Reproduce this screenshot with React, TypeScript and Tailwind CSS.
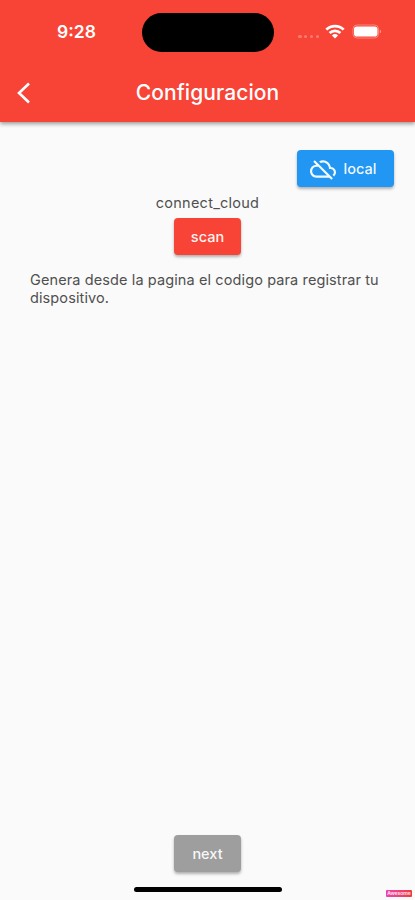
import type { ReactNode } from 'react';
import { MdOutlineCloudOff } from 'react-icons/md';

function StatusBar() {
  return (
    <div className="flex h-[64px] items-center">
      <div className="w-[142px] pl-[57px] text-[17.5px] font-semibold leading-none">
        9:28
      </div>
      <div className="h-[39px] w-[132px] rounded-full bg-black" />
      <div className="flex h-[20px] items-center pl-6">
        <div className="flex gap-[2.4px] pt-[9px]">
          {[0, 1, 2, 3].map((dot) => (
            <span key={dot} className="h-[3.5px] w-[3.5px] rounded-full bg-white/30" />
          ))}
        </div>
        <svg className="relative -top-px ml-[6px] h-[15px] w-[20px]" viewBox="0 0 20 15" aria-hidden="true">
          <g fill="none" stroke="white" strokeWidth="2.7">
            <path d="M1.3 5.6a12.4 12.4 0 0 1 17.4 0" />
            <path d="M4.6 9a7.7 7.7 0 0 1 10.8 0" />
          </g>
          <path d="M10 14.6 6.9 11.4a4.5 4.5 0 0 1 6.2 0Z" fill="white" />
        </svg>
        <svg className="relative -top-px ml-[7px] h-[15px] w-[30px]" viewBox="0 0 30 15" aria-hidden="true">
          <rect x="1" y="1" width="25.5" height="13" rx="4" fill="none" stroke="white" strokeOpacity="0.35" />
          <rect x="2" y="2.5" width="23.5" height="10" rx="2.8" fill="white" />
          <path d="M27.8 5.5v4c1.6-.6 1.6-3.4 0-4Z" fill="white" fillOpacity="0.5" />
        </svg>
      </div>
    </div>
  );
}

function Button({ color, children }: { color: string; children: ReactNode }) {
  return (
    <button
      type="button"
      className={`flex h-[37px] items-center justify-center rounded-[4px] text-[14.5px] font-medium text-white/95 shadow-[0_2px_3px_rgba(0,0,0,0.3)] ${color}`}
    >
      {children}
    </button>
  );
}

export default function App() {
  return (
    <div className="flex h-[900px] w-[415px] flex-col bg-[#fafafa] font-['Inter','Liberation_Sans',sans-serif] text-[#505050]">
      <header className="h-[122px] shrink-0 bg-[#f74436] text-white shadow-[0_2px_4px_rgba(0,0,0,0.38)]">
        <StatusBar />
        <div className="grid h-[57px] grid-cols-[60px_1fr_60px] items-center">
          <button type="button" aria-label="Back" className="pl-[17px]">
            <svg className="h-[22px] w-[14px]" viewBox="0 0 14 22" aria-hidden="true">
              <path d="M12 1.5 2 11l10 9.5" fill="none" stroke="white" strokeWidth="2.6" />
            </svg>
          </button>
          <h1 className="text-center text-[21px] font-medium tracking-[0.1px]">Configuracion</h1>
        </div>
      </header>

      <main className="flex flex-1 flex-col items-center pt-7">
        <div className="mr-[21px] self-end">
          <Button color="w-[97px] bg-[#2196f3] gap-2 pr-[5px]">
            <MdOutlineCloudOff className="h-[26px] w-[26px]" />
            <span>local</span>
          </Button>
        </div>
        <p className="mt-[7px] mb-[6px] text-[14.5px] leading-[18px] tracking-[0.25px]">connect_cloud</p>
        <Button color="w-[67px] bg-[#f74436]">scan</Button>
        <p className="mt-[16px] w-[355px] text-[14.5px] leading-[18px] tracking-[0.11px]">
          Genera desde la pagina el codigo para registrar tu dispositivo.
        </p>
      </main>

      <footer className="relative flex h-[65px] shrink-0 flex-col items-center">
        <Button color="w-[67px] bg-[#9e9e9e]">next</Button>
        <div className="mt-[15px] h-[5px] w-[148px] rounded-full bg-black" />
        <div className="absolute right-[3px] bottom-[3px] flex h-[7px] w-[26px] items-center justify-center rounded-[1px] bg-linear-to-r from-[#ee3fb0] to-[#ee3a35] text-[5px] font-semibold leading-none text-white/90">
          Awesome
        </div>
      </footer>
    </div>
  );
}
